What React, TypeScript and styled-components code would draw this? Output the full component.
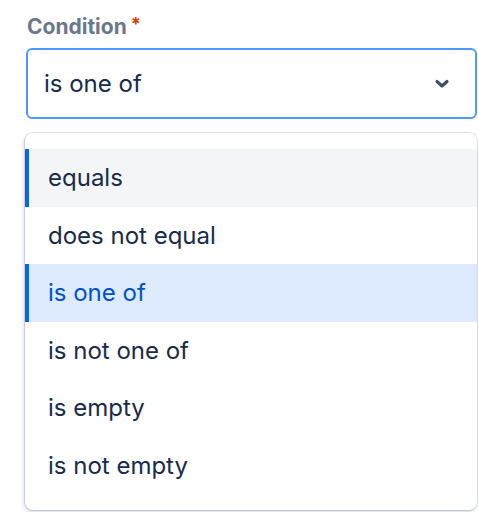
import React, { useState } from 'react';
import styled, { createGlobalStyle } from 'styled-components';

const GlobalStyle = createGlobalStyle`
  html, body {
    margin: 0;
    padding: 0;
    background: #ffffff;
  }
  body {
    font-family: Inter, "Noto Sans", "Liberation Sans", sans-serif;
    -webkit-font-smoothing: antialiased;
  }
`;

const Page = styled.div`
  width: 478px;
  height: 512px;
  padding: 14px 1px 0 25px;
  box-sizing: border-box;
  display: flex;
  flex-direction: column;
`;

const Label = styled.div`
  display: flex;
  align-items: flex-start;
  gap: 4px;
  margin-left: 2px;
  font-size: 21px;
  font-weight: 700;
  line-height: 26px;
  color: #6b778c;
`;

const Required = styled.span`
  color: #de350b;
  font-size: 18px;
  line-height: 20px;
`;

const Control = styled.div`
  margin-top: 8px;
  margin-left: 1px;
  height: 71px;
  box-sizing: border-box;
  border: 2px solid #4c9aff;
  border-radius: 6px;
  display: flex;
  align-items: center;
  justify-content: space-between;
  padding: 0 25px 0 16px;
  font-size: 24px;
  color: #172b4d;
`;

const Menu = styled.div`
  margin-top: 14px;
  width: 452px;
  height: 377px;
  box-sizing: border-box;
  border-radius: 8px;
  background: #ffffff;
  box-shadow: 0 0 0 1px rgba(9, 30, 66, 0.12), -1px 2px 4px rgba(9, 30, 66, 0.18);
  padding: 16px 0 15px;
  display: flex;
  flex-direction: column;
`;

const Option = styled.div<{ $state?: 'hover' | 'selected' }>`
  height: 57.5px;
  display: flex;
  align-items: center;
  padding-left: 23px;
  font-size: 24px;
  color: ${(p) => (p.$state === 'selected' ? '#0052cc' : '#172b4d')};
  background: ${(p) =>
    p.$state === 'selected' ? '#deebff' : p.$state === 'hover' ? '#f4f5f7' : 'transparent'};
  box-shadow: ${(p) => (p.$state ? 'inset 4px 0 0 #0c66e4' : 'none')};
`;

const options = ['equals', 'does not equal', 'is one of', 'is not one of', 'is empty', 'is not empty'];

function App() {
  const [value] = useState('is one of');

  return (
    <Page>
      <GlobalStyle />
      <Label>
        Condition<Required>*</Required>
      </Label>
      <Control>
        <span>{value}</span>
        <svg width="16" height="10" viewBox="0 0 16 10">
          <path
            d="M3 2.5 L8 7 L13 2.5"
            fill="none"
            stroke="#42526e"
            strokeWidth="3.2"
            strokeLinecap="round"
            strokeLinejoin="round"
          />
        </svg>
      </Control>
      <Menu>
        {options.map((o, i) => (
          <Option key={o} $state={i === 0 ? 'hover' : o === value ? 'selected' : undefined}>
            {o}
          </Option>
        ))}
      </Menu>
    </Page>
  );
}

export default App;
